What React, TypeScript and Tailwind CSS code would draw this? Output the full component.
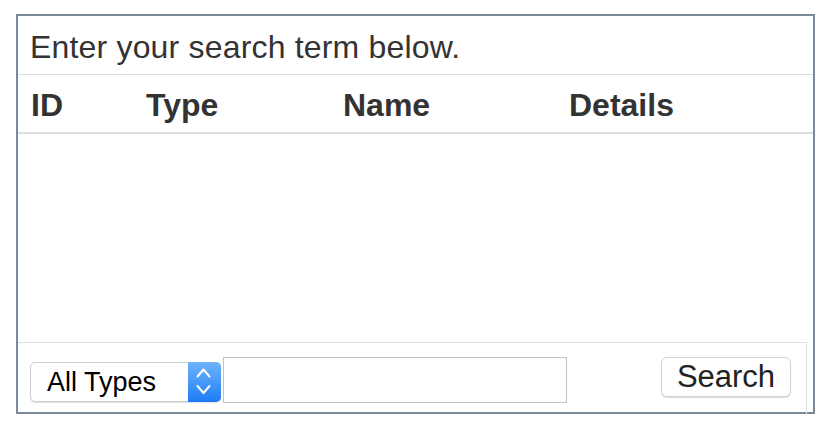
const font = { fontFamily: '"Liberation Sans", Arial, sans-serif' }

const columns = ['ID', 'Type', 'Name', 'Details']

const TypeSelect = () => (
  <div className="ml-[12px] mt-[19px] flex h-[40px] w-[191px] rounded-[5px] border border-[#cfcfcf] bg-white shadow-[0_1px_1px_rgba(0,0,0,0.12)]">
    <div className="flex flex-1 items-center pl-[16px] text-[27px] leading-[30px] text-black">
      All Types
    </div>
    <div className="-my-px -mr-px flex w-[33px] items-center justify-center rounded-r-[5px] bg-gradient-to-b from-[#6cb3fb] to-[#1a7cf6]">
      <svg width="33" height="40" viewBox="0 0 33 40" fill="none">
        <path
          d="M9.5 14.5 L15.5 7.5 L21.5 14.5"
          stroke="white"
          strokeWidth="2"
          strokeLinecap="round"
          strokeLinejoin="round"
        />
        <path
          d="M9.5 24 L15.5 31 L21.5 24"
          stroke="white"
          strokeWidth="2"
          strokeLinecap="round"
          strokeLinejoin="round"
        />
      </svg>
    </div>
  </div>
)

const App = () => {
  return (
    <div className="h-[432px] w-[838px] bg-white pl-[16px] pt-[14px]" style={font}>
      <div className="flex h-[400px] w-[799px] flex-col border-2 border-[#7a8a9b]">
        <div className="h-[59px] shrink-0 border-b border-[#dddddd] pl-[12px] pt-[13px] text-[32px] leading-[36px] tracking-[0.18px] text-[#333333]">
          Enter your search term below.
        </div>
        <div className="grid h-[59px] shrink-0 grid-cols-[115px_197px_226px_1fr] border-b-2 border-[#dddddd] pt-[12px] text-[32px] font-bold leading-[36px] text-[#333333]">
          {columns.map(col => (
            <div key={col} className="pl-[13px]">
              {col}
            </div>
          ))}
        </div>
        <div className="h-[208px] shrink-0" />
        <div className="flex h-[73px] w-[789px] shrink-0 items-start border-r border-t border-[#dddddd]">
          <TypeSelect />
          <input
            type="text"
            className="ml-[2px] mt-[14px] h-[46px] w-[344px] border border-[#c2c2c2] bg-white outline-none"
          />
          <button
            type="button"
            className="ml-auto mr-[15px] mt-[14px] flex h-[40px] w-[130px] items-center justify-center rounded-[6px] border border-[#d4d4d4] bg-white text-[31px] leading-[34px] text-[#222222] shadow-[0_1px_1px_rgba(0,0,0,0.15)]">
            Search
          </button>
        </div>
      </div>
    </div>
  )
}

export default App
